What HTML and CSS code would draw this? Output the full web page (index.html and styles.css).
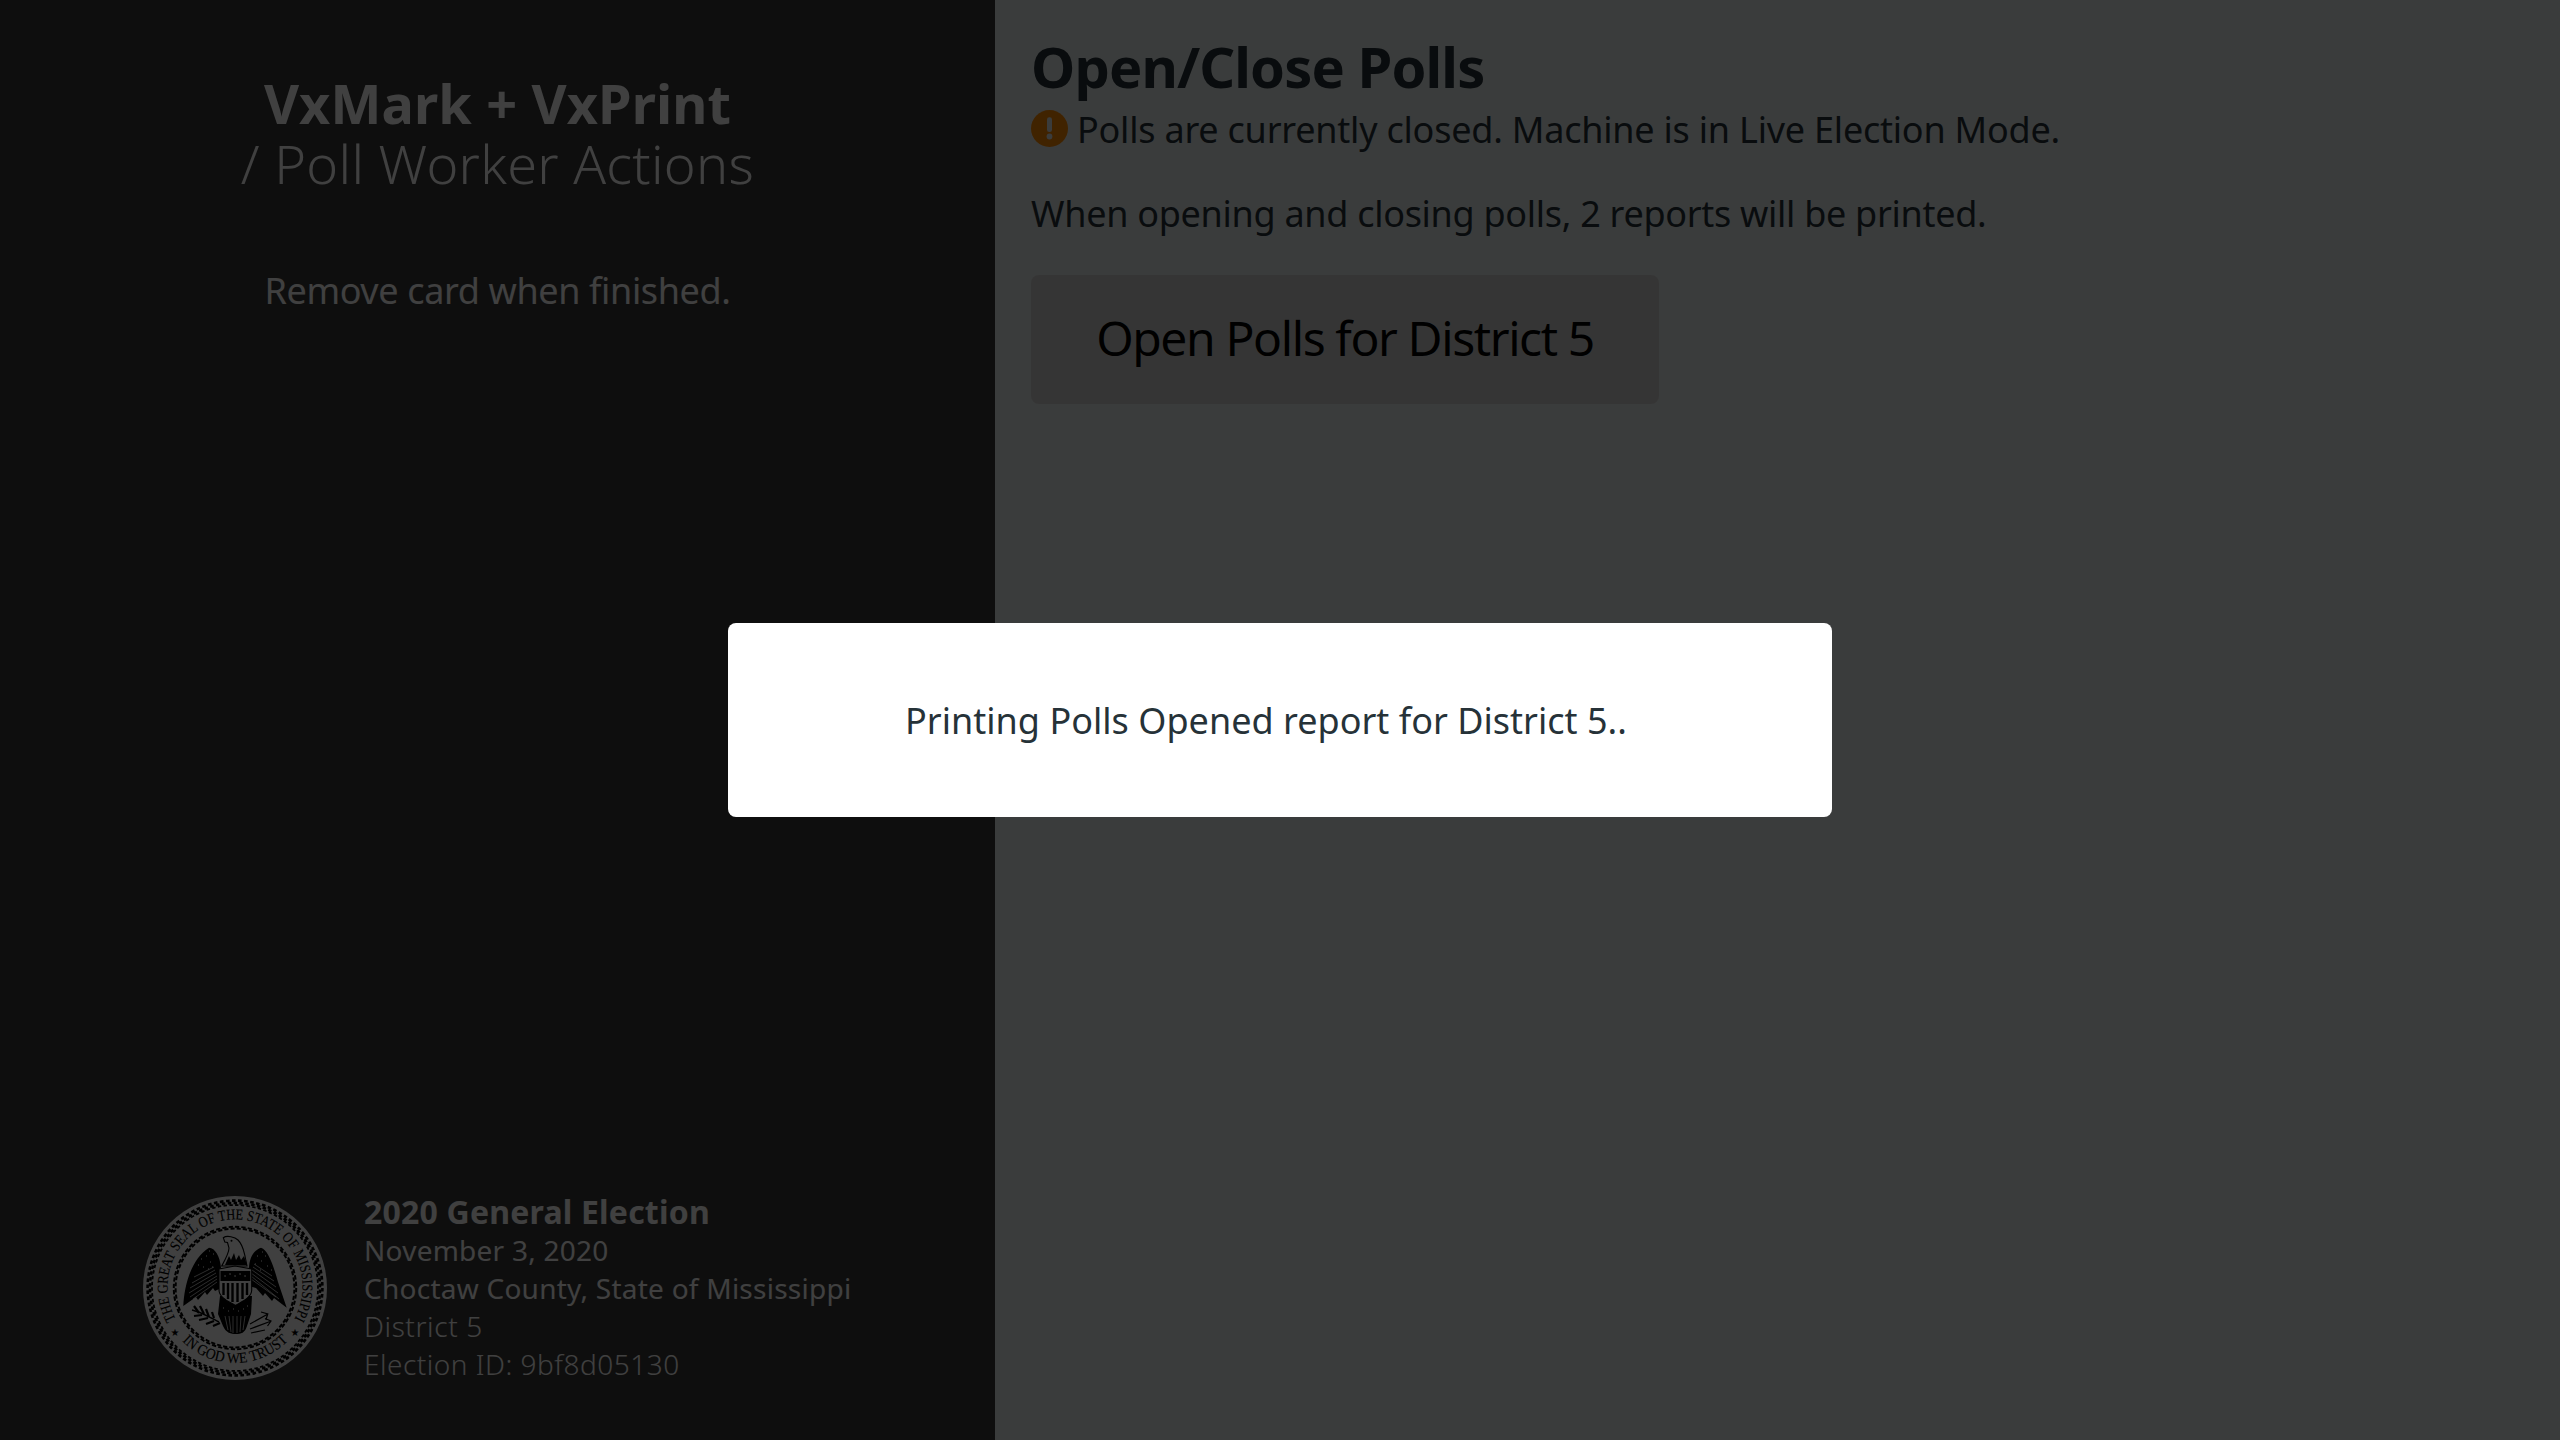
FILE: index.html
```html
<!DOCTYPE html>
<html lang="en">
<head>
<meta charset="utf-8">
<title>VxMark Poll Worker Actions</title>
<link rel="stylesheet" href="styles.css">
</head>
<body>
<div class="screen">
  <aside class="sidebar">
    <header class="brand">
      <h1 class="brand-title"><span class="brand-name">VxMark + VxPrint</span><span class="brand-sub">/ Poll Worker Actions</span></h1>
      <p class="brand-hint">Remove card when finished.</p>
    </header>
    <footer class="election">
      <svg class="seal" viewBox="0 0 184 184" aria-hidden="true">
        <defs>
          <path id="arcTop" d="M32.8 123.3 A67.5 67.5 0 1 1 151.2 123.3"/>
          <path id="arcBottom" d="M39 145 A75 75 0 0 0 145 145"/>
        </defs>
        <circle cx="92" cy="92" r="92" fill="#fff"/>
        <g class="rope">
          <circle cx="92" cy="92" r="87.4" pathLength="360" stroke-width="2.6" stroke-dasharray="2.4 1.6"/>
          <circle cx="92" cy="92" r="85" pathLength="360" stroke-width="2.6" stroke-dasharray="2.4 1.6" transform="rotate(1 92 92)"/>
          <circle cx="92" cy="92" r="83" pathLength="360" stroke-width="1.8" stroke-dasharray="2.4 1.6" transform="rotate(2 92 92)"/>
          <circle cx="92" cy="92" r="61.2" pathLength="360" stroke-width="2" stroke-dasharray="4 2"/>
          <circle cx="92" cy="92" r="59.4" pathLength="360" stroke-width="2" stroke-dasharray="4 2" transform="rotate(1.6 92 92)"/>
        </g>
        <text class="seal-text" textLength="279" lengthAdjust="spacingAndGlyphs"><textPath href="#arcTop">THE GREAT SEAL OF THE STATE OF MISSISSIPPI</textPath></text>
        <text class="seal-text" textLength="118" lengthAdjust="spacingAndGlyphs"><textPath href="#arcBottom">IN GOD WE TRUST</textPath></text>
        <text class="seal-star" x="32" y="140">★</text>
        <text class="seal-star" x="152" y="140">★</text>
        <path d="M66 51.7 C72 52 77 60 78 72 L78 92 L72 95 L70 92 L64 99 L62 96 L55 104 L53 101 L40.3 110 C41 92 47 64 66 51.7Z" fill="#000"/>
        <path d="M118 51.7 C125 54 130 68 135 86 L143.7 111.7 L131 102 L129 105 L122 97 L120 100 L113 92 L106 90 L106 73 C106 62 111 54 118 51.7Z" fill="#000"/>
        <path class="feather" d="M74 86 L50 103 M74 83 L47 101 M74 80 L46 97 M73 77 L47 92 M72 74 L49 87 M71 71 L51 81 M108 83 L133 101 M108 80 L136 103 M108 77 L135 97 M109 74 L133 91 M110 71 L131 85 M111 68 L129 80"/>
        <path class="speck" d="M58 63 h1 M63 60 h1 M67 66 h1 M60 71 h1 M70 58 h1 M65 73 h1 M55 69 h1 M69 71 h1 M66 55 h1 M122 60 h1 M118 65 h1 M114 60 h1 M124 70 h1 M117 74 h1 M112 68 h1 M119 56 h1 M128 74 h1"/>
        <path d="M80.3 41.7 C84 39 92 41 95 44 C100 49 101 56 102 60 L104 70 L78.7 70 C82 64 86 57 86 52 L84.5 46.5 L81.8 46Z" fill="#fff" stroke="#000" stroke-width="1.1"/>
        <path d="M82 69 L86 60 L88 64 L91 57 L93 64 L96 59 L98 64 L101 60 L104 69Z" fill="#000"/>
        <circle cx="88.5" cy="44.8" r="1" fill="#000"/>
        <path d="M77 100 L75 118 L80 130 C83 137 88 138 93 138 C98 138 102 137 104 130 L108 118 L109 100Z" fill="#000"/>
        <path class="feather" d="M82 120 L85 134 M86 120 L88 136 M90 120 V137 M94 120 V137 M98 120 L97 136 M102 120 L100 134"/>
        <path class="speck" d="M80 112 h1 M85 115 h1 M90 113 h1 M95 115 h1 M100 113 h1 M104 110 h1"/>
        <path d="M76 73 L92 70 L108.7 73 L108.7 94 C108.7 102 98 106 92.4 109.5 C87 106 76 102 76 94Z" fill="#fff" stroke="#000" stroke-width="1.1"/>
        <path d="M77.5 75 L107.3 75 L107.3 85 L77.5 85Z" fill="#000"/>
        <path class="bars" d="M80.5 87 V99 M85 87 V103 M89.5 87 V106 M94.5 87 V106 M99.5 87 V103 M104 87 V99"/>
        <path class="stars" d="M82 80 h.1 M87 78 h.1 M92 80 h.1 M97 78 h.1 M102 80 h.1"/>
        <path class="branch" d="M49 114 C58 116 68 122 76 126"/>
        <path class="leaf" d="M51 110 L56 117 M57 110 L61 118 M63 113 L66 121 M69 116 L71 122 M51 120 L59 119 M56 124 L65 122 M63 128 L71 125 M70 130 L77 127"/>
        <path class="arrow" d="M107 128 L124 118.5 M107 133 L127 125.5 M108 137 L122 134 M118 116 L124.8 117.8 L122.8 124 M122 122.5 L128 125 L124.5 130"/>
      </svg>
      <div class="election-info">
        <div class="election-name">2020 General Election</div>
        <div class="election-line">November 3, 2020</div>
        <div class="election-line">Choctaw County, State of Mississippi</div>
        <div class="election-line light">District 5</div>
        <div class="election-line light id">Election ID: 9bf8d05130</div>
      </div>
    </footer>
  </aside>
  <main class="content">
    <h2 class="page-title">Open/Close Polls</h2>
    <p class="status">
      <svg class="warn" viewBox="0 0 37 37" aria-hidden="true"><circle cx="18.5" cy="18.5" r="18.5" fill="#ff8c00"/><rect x="16" y="7.3" width="5" height="14.7" rx="2.3" fill="#e8eeee"/><circle cx="18.5" cy="26.5" r="2.9" fill="#e8eeee"/></svg>
      <span>Polls are currently closed. Machine is in Live Election Mode.</span>
    </p>
    <p class="note">When opening and closing polls, 2 reports will be printed.</p>
    <button class="action">Open Polls for District 5</button>
  </main>
</div>
<div class="overlay">
  <div class="modal"><span class="modal-text">Printing Polls Opened report for District 5..</span></div>
</div>
</body>
</html>
```
FILE: styles.css
```css
html, body { margin: 0; height: 100%; }
body {
  font-family: "Noto Sans", "Open Sans", sans-serif;
  color: #263238;
  overflow: hidden;
}
.screen { display: flex; height: 1440px; }
.sidebar {
  width: 995px;
  flex: none;
  background: #383838;
  color: #fff;
  display: flex;
  flex-direction: column;
  justify-content: space-between;
  box-sizing: border-box;
}
.brand { text-align: center; padding-top: 68px; }
.brand-title { margin: 0; font-weight: 400; }
.brand-name { display: block; font-size: 54px; font-weight: 700; line-height: 70px; letter-spacing: 0.15px; }
.brand-sub { display: block; font-size: 54px; font-weight: 300; line-height: 51px; letter-spacing: 0.3px; }
.brand-hint { margin: 79px 0 0; font-size: 36px; line-height: 46px; font-weight: 400; letter-spacing: -0.37px; }
.election { display: flex; align-items: center; gap: 37px; padding: 0 0 57px 143px; }
.seal { width: 184px; height: 184px; flex: none; }
.rope circle { fill: none; stroke: #000; }
.seal-text { font-family: "Liberation Serif", serif; font-size: 15px; fill: #000; stroke: #000; stroke-width: .15; }
.seal-star { font-family: "DejaVu Sans", sans-serif; font-size: 10px; fill: #000; text-anchor: middle; }
.feather { stroke: #fff; stroke-width: .7; fill: none; }
.speck { stroke: #fff; stroke-width: 1; fill: none; }
.bars { stroke: #000; stroke-width: 2.4; fill: none; }
.stars { stroke: #fff; stroke-width: 1.6; stroke-linecap: round; fill: none; }
.branch { stroke: #000; stroke-width: 1.4; fill: none; }
.leaf { stroke: #000; stroke-width: 2.2; fill: none; }
.arrow { stroke: #000; stroke-width: 1.2; fill: none; }
.election-info { font-size: 28px; line-height: 38px; }
.election-name { font-size: 32px; font-weight: 700; letter-spacing: 0.2px; }
.election-line { font-weight: 400; letter-spacing: 0.25px; }
.election-line.light { font-weight: 300; letter-spacing: 0.6px; }
.election-line.light.id { letter-spacing: 0.5px; }
.content { flex: 1; background: #e8eeee; padding: 30.5px 36px; box-sizing: border-box; }
.page-title { margin: 0; font-size: 56px; line-height: 70px; font-weight: 700; letter-spacing: -0.9px; }
.status { margin: 6.5px 0 0; display: flex; align-items: center; gap: 9px; font-size: 36px; line-height: 46px; font-weight: 400; letter-spacing: -0.22px; }
.warn { width: 37px; height: 37px; flex: none; margin-top: -3px; }
.note { margin: 38px 0 0; font-size: 36px; line-height: 46px; letter-spacing: -0.29px; }
.action {
  display: block;
  margin-top: 38px;
  width: 628px;
  height: 129px;
  padding: 0 0 3px;
  border: 0;
  border-radius: 8px;
  background: #d4d4d4;
  color: #000;
  font: 400 48px/1 "Noto Sans", sans-serif;
  letter-spacing: -1.4px;
}
.overlay {
  position: fixed;
  inset: 0;
  background: rgba(0,0,0,.75);
  display: flex;
  align-items: center;
  justify-content: center;
}
.modal {
  width: 1104px;
  height: 194px;
  background: #fff;
  border-radius: 8px;
  display: flex;
  align-items: center;
  padding-left: 177px;
  box-sizing: border-box;
}
.modal-text { font-size: 36px; letter-spacing: 0.02px; }
```
